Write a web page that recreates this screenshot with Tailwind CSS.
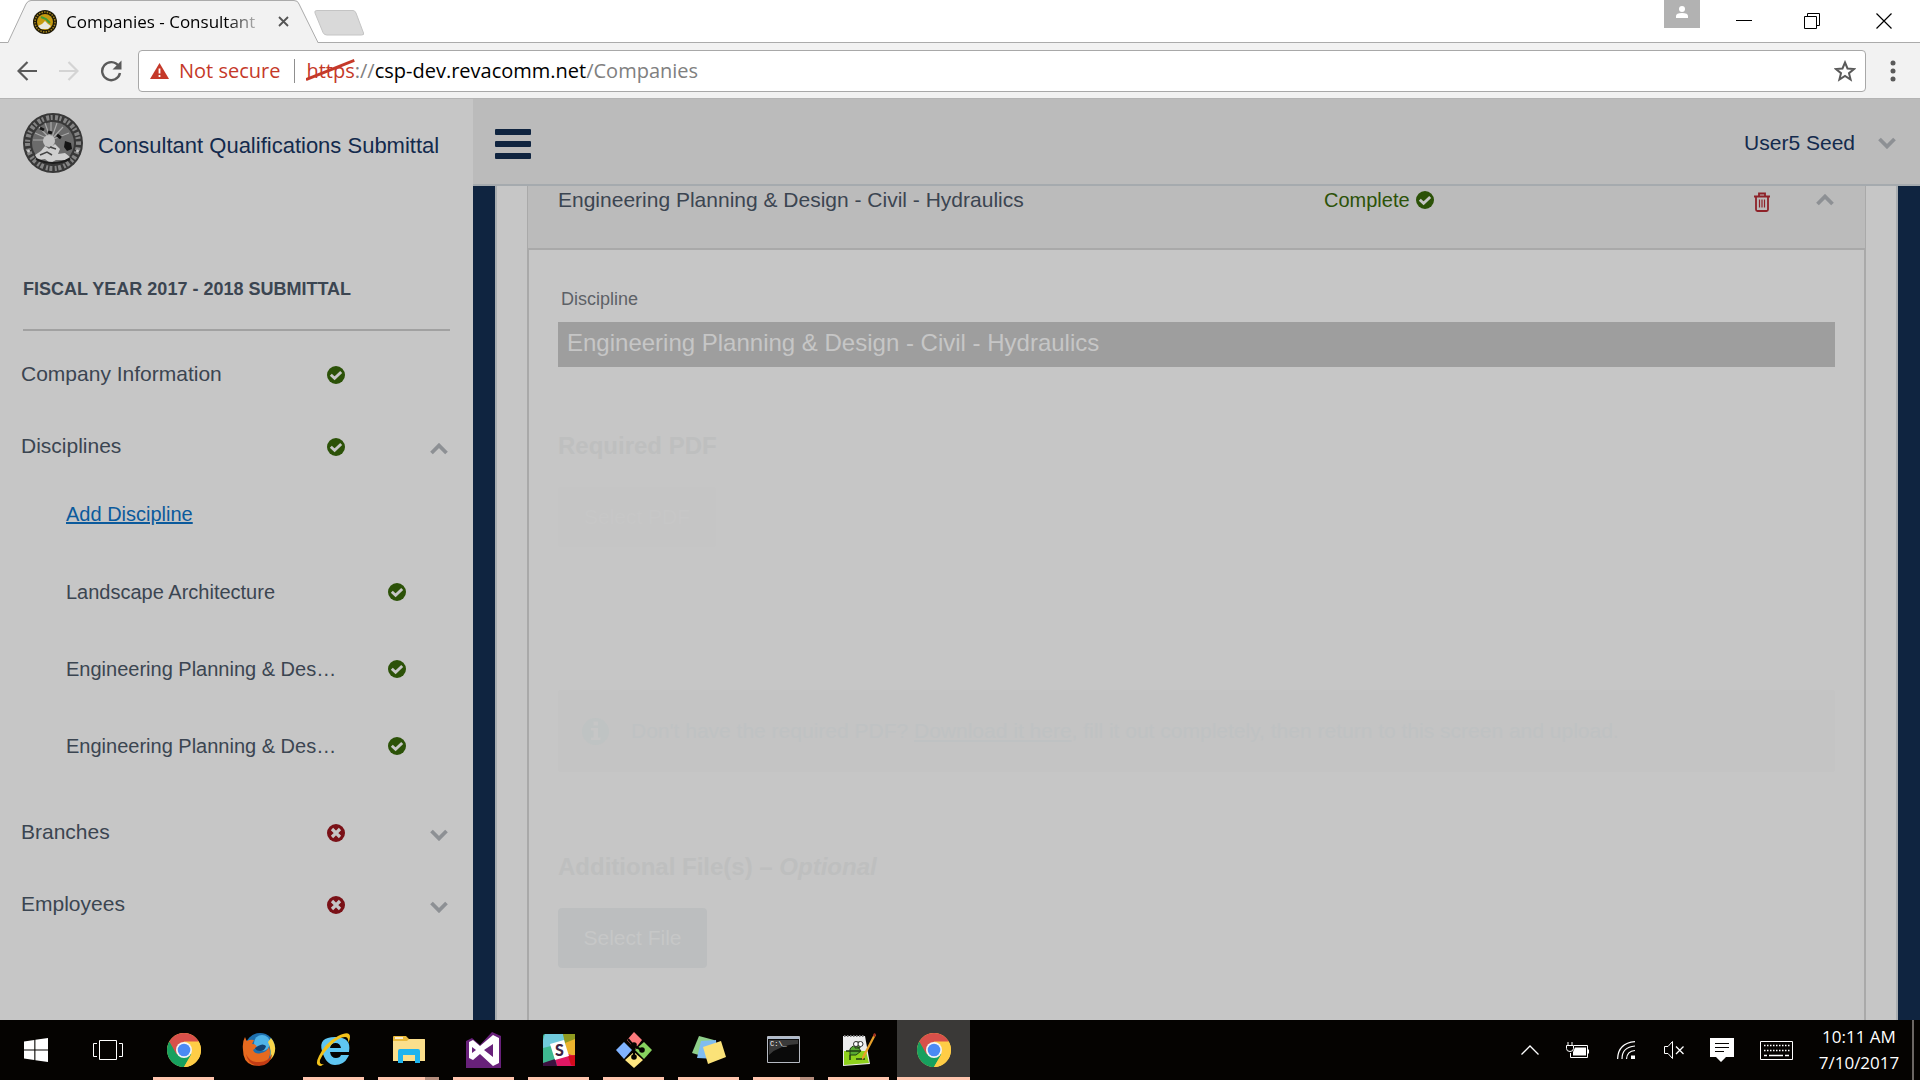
<!DOCTYPE html>
<html lang="en">
<head>
<meta charset="utf-8">
<title>Companies - Consultant Qualifications Submittal</title>
<script src="https://cdn.jsdelivr.net/npm/@tailwindcss/browser@4"></script>
</head>
<body class="flex h-screen flex-col overflow-hidden bg-white font-['Liberation_Sans',sans-serif] text-[#3b4551]">

<svg class="hidden" xmlns="http://www.w3.org/2000/svg">
  <symbol id="ok" viewBox="0 0 18 18"><circle cx="9" cy="9" r="9" fill="#2c5208"/><path d="M3.800 8.800 7.600 12.300 14.200 6" fill="none" stroke="#c6c6c6" stroke-width="2.900"/></symbol>
  <symbol id="bad" viewBox="0 0 18 18"><circle cx="9" cy="9" r="9" fill="#7a1117"/><path d="m5 5 8 8m0-8-8 8" fill="none" stroke="#c6c6c6" stroke-width="3.200"/></symbol>
  <symbol id="down" viewBox="0 0 18 12"><path d="m1.500 2 7.500 7.500L16.500 2" fill="none" stroke="#8d9094" stroke-width="3.800"/></symbol>
  <symbol id="up" viewBox="0 0 18 12"><path d="M1.500 10 9 2.500l7.500 7.500" fill="none" stroke="#8d9094" stroke-width="3.800"/></symbol>
  <symbol id="chrome" viewBox="0 0 34 34">
    <circle cx="17" cy="17" r="17" fill="#ffcd46"/>
    <path d="M2.300 8.500A17 17 0 0 0 17 34l7.400-12.800L17 17z" fill="#17a05e"/>
    <path d="M17 8.500h14.700A17 17 0 0 1 17 34l7.400-12.800z" fill="#ffcd46"/>
    <path d="M2.300 8.500A17 17 0 0 1 31.700 8.500H17L9.600 21.200z" fill="#d8504a"/>
    <circle cx="17" cy="17" r="8" fill="#f4f4f4"/><circle cx="17" cy="17" r="6.300" fill="#4a8af4"/>
  </symbol>
</svg>

<!-- Browser tabs -->
<header class="flex h-[43px] shrink-0 items-start justify-between border-b border-[#ababab] bg-white">
  <div class="flex">
    <div class="relative ml-2 flex h-[43px] w-[311px] items-center pr-[26px] pl-[25px]">
      <svg class="absolute inset-0 h-full w-full" viewBox="0 0 311 43"><path d="M0 43 17 5q2-5 6-5H286q4 0 6 5l18 38z" fill="#f2f2f2"/><path d="M0 42.500 18 4q2-3.500 5-3.500H286q4 0 5 3.500l19 38.500" fill="none" stroke="#ababab"/></svg>
      <svg class="relative size-6 shrink-0" viewBox="0 0 24 24"><circle cx="12" cy="12" r="12" fill="#1d1806"/><circle cx="12" cy="12" r="10" fill="none" stroke="#a8871c" stroke-width="1.500" stroke-dasharray="1.500 1.200"/><circle cx="12" cy="12" r="8" fill="#c79a10"/><path d="m8 7 5 2 4 4" fill="none" stroke="#3f9c3a" stroke-width="2"/><path d="M5 16l4-2 3-3 3 3 3 2-3 3H8z" fill="#e8e8e0"/></svg>
      <span class="relative ml-[9px] w-[200px] shrink-0 bg-linear-to-r from-black from-80% to-transparent to-100% bg-clip-text font-['Open_Sans',sans-serif] text-[17px] leading-6 whitespace-nowrap text-transparent">Companies - Consultant</span>
      <button aria-label="Close tab" class="relative ml-3 shrink-0"><svg class="size-[11px]" viewBox="0 0 11 11"><path d="m1 1 9 9m0-9-9 9" stroke="#555" stroke-width="1.800"/></svg></button>
    </div>
    <button aria-label="New tab" class="-ml-[5px] h-[26px] pt-[10px]"><svg class="h-[26px] w-[51px]" viewBox="0 0 51 26"><path d="M3 .5h36q2 0 3 2.500l7.500 20q1 2-2 2H13q-3 0-4-2.500L1 3q-1-2.500 2-2.500z" fill="#d9d9d9" stroke="#c4c4c4"/></svg></button>
  </div>
  <div class="flex">
    <button aria-label="Profile" class="flex h-7 w-9 items-center justify-center bg-[#b2b2b2]"><svg class="mb-1 h-3 w-3" viewBox="0 0 12 12"><circle cx="6" cy="3" r="3" fill="#fff"/><path d="M0 12V10q0-3 6-3t6 3v2z" fill="#fff"/></svg></button>
    <button aria-label="Minimize" class="flex h-[41px] w-[87px] items-center justify-center"><svg class="size-4" viewBox="0 0 16 16"><path d="M0 7.500h16" stroke="#000"/></svg></button>
    <button aria-label="Restore" class="flex h-[41px] w-[50px] items-center justify-center"><svg class="size-4" viewBox="0 0 16 16"><path d="M.5 3.500h12v12H.5zM3.500 3.500v-3h12v12h-3" fill="none" stroke="#000"/></svg></button>
    <button aria-label="Close" class="mr-3 flex h-[41px] w-[71px] items-center justify-end pr-4"><svg class="size-4" viewBox="0 0 16 16"><path d="m.5.5 15 15m0-15-15 15" stroke="#000" stroke-width="1.200"/></svg></button>
  </div>
</header>

<!-- Address bar -->
<nav class="flex h-14 shrink-0 items-center border-b border-[#b4b4b4] bg-[#f2f2f2] pl-[17px] font-['Open_Sans',sans-serif] text-[20px]">
  <button aria-label="Back"><svg class="size-5" viewBox="0 0 20 20"><path d="M20 10H1.500M10.500 1 1.500 10l9 9" fill="none" stroke="#5a5a5a" stroke-width="2.200"/></svg></button>
  <button aria-label="Forward" class="ml-[22px]" disabled><svg class="size-5" viewBox="0 0 20 20"><path d="M0 10h18.500M9.500 1l9 9-9 9" fill="none" stroke="#d4d4d4" stroke-width="2.200"/></svg></button>
  <button aria-label="Reload" class="ml-[21px]"><svg class="size-[22px]" viewBox="0 0 22 22"><path d="M18.600 6A9 9 0 1 0 20 13" fill="none" stroke="#5a5a5a" stroke-width="2.400"/><path d="M21.500.5v9h-9z" fill="#5a5a5a"/></svg></button>
  <div role="textbox" aria-label="Address" class="ml-4 flex h-[42px] min-w-0 flex-1 items-center rounded-[4px] border border-[#a8a8a8] bg-white pr-[9px] pl-[11px] whitespace-nowrap">
    <svg class="h-4 w-[19px]" viewBox="0 0 19 16"><path d="M9.500 0 19 16H0z" fill="#c53929"/><path d="M9.500 5.500v5m0 1.500v2" stroke="#fff" stroke-width="1.800"/></svg>
    <span class="ml-[10px] text-[#c53929]">Not secure</span>
    <span class="mr-[11px] ml-[14px] h-6 w-px bg-[#8f8f8f]"></span>
    <span class="relative text-[#c53929]">https<svg class="absolute inset-0 h-full w-full" viewBox="0 0 48 28" preserveAspectRatio="none"><path d="M0 22 48 4" stroke="#c53929" stroke-width="2.800"/></svg></span><span class="text-[#808080]">://</span><span class="text-black">csp-dev.revacomm.net</span><span class="text-[#808080]">/Companies</span>
    <button aria-label="Bookmark" class="ml-auto"><svg class="size-[22px]" viewBox="0 0 22 22"><path d="m11 2.500 2.500 6 6.500.5-5 4.200 1.600 6.300L11 16l-5.600 3.500L7 13.200 2 9l6.500-.5z" fill="none" stroke="#5a5a5a" stroke-width="2"/></svg></button>
  </div>
  <button aria-label="Menu" class="mr-6 ml-6"><svg class="h-[22px] w-[6px]" viewBox="0 0 6 22"><g fill="#5a5a5a"><circle cx="3" cy="3" r="2.500"/><circle cx="3" cy="11" r="2.500"/><circle cx="3" cy="19" r="2.500"/></g></svg></button>
</nav>

<div class="flex min-h-0 flex-1 bg-[#0f2440]">
  <!-- Sidebar -->
  <aside class="w-[473px] shrink-0 overflow-hidden bg-[#c6c6c6]">
    <div class="flex h-[180px] items-start gap-[15px] pt-[14px] pl-[23px]">
      <svg class="size-[60px]" viewBox="0 0 60 60">
        <circle cx="30" cy="30" r="30" fill="#383838"/>
        <circle cx="30" cy="30" r="25.500" fill="none" stroke="#858585" stroke-width="5" stroke-dasharray="2 2.500 3 1.500"/>
        <circle cx="30" cy="30" r="21" fill="#6b6b6b"/>
        <g stroke="#a9a9a9" stroke-width="1.200"><path d="M28 27 12 20M28 27 16 14M28 27l-6-17M28 27V9M28 27l6-17M28 27l12-13M28 27l18-7M28 27 10 27"/></g>
        <circle cx="26" cy="28" r="6" fill="#c2c2c2"/>
        <path d="m17 15 4 2m4 2 4 1m5 2 4 3" stroke="#151515" stroke-width="3"/><path d="m42 28 6 2 1 6-5 2-3-4z" fill="#151515"/>
        <path d="m12 42 6-4 4-5 4 3 6-5 5 5-2 5 7-1 5 4-5 3H33l-6 3-5-4-7 1z" fill="#cfcfcf"/><path d="m17 42 7-3 5 3m4-6-6-2" fill="none" stroke="#444" stroke-width="1.500"/>
        <path d="M13 46q17 8 34 0" fill="none" stroke="#1d1d1d" stroke-width="2"/><circle cx="5.500" cy="38" r="1.500" fill="#ccc"/><circle cx="54.500" cy="38" r="1.500" fill="#ccc"/>
      </svg>
      <h1 class="pt-[21px] text-[22px] leading-6 text-[#132a4d]">Consultant Qualifications Submittal</h1>
    </div>
    <h2 class="mr-[23px] ml-[23px] h-[52px] border-b-2 border-[#a1a1a1] text-[18px] leading-5 font-bold">FISCAL YEAR 2017 - 2018 SUBMITTAL</h2>
    <ul class="pt-2 pr-[25px] pl-[21px] text-[21px]">
      <li class="grid h-[72px] grid-cols-[306px_1fr_18px] items-center"><a href="#" class="pb-[2px]">Company Information</a><svg class="size-[18px]"><use href="#ok"/></svg></li>
      <li>
        <div class="grid h-[72px] grid-cols-[306px_1fr_18px] items-center"><a href="#" class="pb-[2px]">Disciplines</a><svg class="size-[18px]"><use href="#ok"/></svg><button aria-label="Collapse disciplines" class="pt-[3px]"><svg class="h-3 w-[18px]"><use href="#up"/></svg></button></div>
        <ul class="pb-[13px] pl-[45px] text-[20px]">
          <li class="mb-2 flex h-[62px] items-center"><a href="#" class="text-[#0b5a9c] underline">Add Discipline</a></li>
          <li class="grid h-[77px] grid-cols-[265px_1fr] items-center gap-x-[57px] whitespace-nowrap"><a href="#">Landscape Architecture</a><svg class="size-[18px]"><use href="#ok"/></svg></li>
          <li class="grid h-[77px] grid-cols-[265px_1fr] items-center gap-x-[57px] whitespace-nowrap"><a href="#">Engineering Planning &amp; Des…</a><svg class="size-[18px]"><use href="#ok"/></svg></li>
          <li class="grid h-[77px] grid-cols-[265px_1fr] items-center gap-x-[57px] whitespace-nowrap"><a href="#">Engineering Planning &amp; Des…</a><svg class="size-[18px]"><use href="#ok"/></svg></li>
        </ul>
      </li>
      <li class="grid h-[72px] grid-cols-[306px_1fr_18px] items-center"><a href="#" class="pb-[2px]">Branches</a><svg class="size-[18px]"><use href="#bad"/></svg><button aria-label="Expand branches" class="pt-[3px]"><svg class="h-3 w-[18px]"><use href="#down"/></svg></button></li>
      <li class="grid h-[72px] grid-cols-[306px_1fr_18px] items-center"><a href="#" class="pb-[2px]">Employees</a><svg class="size-[18px]"><use href="#bad"/></svg><button aria-label="Expand employees" class="pt-[3px]"><svg class="h-3 w-[18px]"><use href="#down"/></svg></button></li>
    </ul>
  </aside>

  <div class="flex min-w-0 flex-1 flex-col">
    <div class="flex h-[87px] shrink-0 items-center justify-between border-b-2 border-[#a5aaae] bg-[#bbbbbb] pr-6 pl-[22px]">
      <button aria-label="Toggle menu" class="mt-1 flex flex-col gap-[6px]"><span class="h-[6px] w-9 rounded-[1px] bg-[#0f2440]"></span><span class="h-[6px] w-9 rounded-[1px] bg-[#0f2440]"></span><span class="h-[6px] w-9 rounded-[1px] bg-[#0f2440]"></span></button>
      <button class="flex items-center gap-[23px] pt-[2px] text-[21px] text-[#132a4d]">User5 Seed<svg class="h-3 w-[18px]"><use href="#down"/></svg></button>
    </div>
    <main class="mx-[22px] flex min-h-0 flex-1 overflow-hidden border-x-2 border-[#a9adb0] bg-[#c6c6c6] px-[30px]">
      <section class="flex min-w-0 flex-1 flex-col">
        <div class="flex h-16 shrink-0 items-start border-x border-b-2 border-[#a9a9a9] bg-[#bbbbbb] pr-[31px] pl-[30px] text-[20px] leading-6">
          <h2 class="w-[766px] pt-[2px] text-[21px]">Engineering Planning &amp; Design - Civil - Hydraulics</h2>
          <span class="flex items-center gap-[6px] pt-[2px] text-[#2c5208]">Complete<svg class="size-[18px]"><use href="#ok"/></svg></span>
          <button aria-label="Delete discipline" class="mt-[6px] ml-auto"><svg class="h-5 w-4" viewBox="0 0 16 20"><path d="M0 4.500h16M5 4V1.500h6V4M2 5v12.500q0 1.500 1.500 1.500h9q1.500 0 1.500-1.500V5" fill="none" stroke="#8e2229" stroke-width="1.800"/><path d="M5.500 7.500v8M8 7.500v8m2.500-8v8" stroke="#8e2229" stroke-width="1.200"/></svg></button>
          <button aria-label="Collapse" class="mt-[8px] ml-[46px]"><svg class="h-3 w-[18px]"><use href="#up"/></svg></button>
        </div>
        <div class="flex min-h-0 flex-1 flex-col items-start overflow-hidden border-x-2 border-[#a9a9a9] px-[29px] pt-[37px]">
          <label for="discipline" class="pl-[3px] text-[18px] leading-6 text-[#5d6166]">Discipline</label>
          <input id="discipline" readonly value="Engineering Planning &amp; Design - Civil - Hydraulics" class="mt-[11px] h-[45px] w-full shrink-0 bg-[#9e9e9e] px-[9px] pb-[3px] text-[24px] text-[#c6c6c6] outline-none">
          <h3 class="mt-[65px] text-[24px] leading-7 font-bold text-[#bebfbf]">Required PDF</h3>
          <button class="mt-[27px] h-[60px] w-[158px] shrink-0 rounded-[3px] bg-[#c5c5c5] text-[21px] text-[#c7c7c7]">Select PDF</button>
          <div class="mt-[143px] flex h-[82px] w-full shrink-0 items-center rounded-[3px] bg-[#c4c4c4] pl-6 text-[21px] text-[#bfc2c3]">
            <svg class="size-[27px]" viewBox="0 0 27 27"><circle cx="13.500" cy="13.500" r="13.500" fill="#bfc3c3"/><path d="M11.500 3.500h4.500v4h-4.500zM9 10h7v9.500h2.500V22H9v-2.500h2.500v-7H9z" fill="#c6c6c6"/></svg>
            <p class="ml-[22px]">Don't have the required PDF? <a href="#" class="underline decoration-2 underline-offset-2">Download it here</a>, fill it out completely, then return to this screen and upload.</p>
          </div>
          <h3 class="mt-[81px] text-[24px] leading-7 font-bold text-[#bebfbf]">Additional File(s) – <em>Optional</em></h3>
          <button class="mt-[27px] h-[60px] w-[149px] shrink-0 rounded-[4px] bg-[#bcbebf] text-[21px] text-[#c6c7c7]">Select File</button>
        </div>
      </section>
    </main>
  </div>
</div>

<!-- Taskbar -->
<footer class="flex h-[60px] shrink-0 items-stretch justify-between bg-[#050301] text-white">
  <div class="flex">
    <button aria-label="Start" class="flex w-[72px] items-center justify-center"><svg class="size-6" viewBox="0 0 24 24"><path d="M0 3.400 10.300 2v9.400H0zM11.400 1.800 24 0v11.400H11.400zM0 12.600h10.300V22L0 20.600zM11.400 12.600H24V24l-12.600-1.800z" fill="#fff"/></svg></button>
    <button aria-label="Task view" class="flex w-[74px] items-center justify-center pr-[2px]"><svg class="h-5 w-[30px]" viewBox="0 0 30 20"><path d="M6.500.5h17v19h-17zM4 3.500H.5v13H4M26 3.500h3.500v13H26" fill="none" stroke="#fff"/></svg></button>

    <button aria-label="Chrome" class="mx-[7px] flex w-[61px] items-center justify-center border-b-[3px] border-[#ffc5ae] pt-[2px]"><svg class="size-[34px]"><use href="#chrome"/></svg></button>
    <button aria-label="Firefox" class="mx-[7px] flex w-[61px] items-center justify-center pb-[2px]"><svg class="size-[34px]" viewBox="0 0 34 34"><circle cx="18" cy="16" r="15" fill="#1d6fae"/><circle cx="20" cy="11" r="8" fill="#4fb3e8"/><path d="M29 6q5 6 4 13-1 6-5 9 2-10-2-18z" fill="#f9d54a"/><path d="M3 5q1 3 2 4 3-2 7-1l-2 4q4 0 5 3l-4 3q2 5 8 3 6-1 8-6 3 9-3 15-6 5-14 3Q1 30 1 18 0 10 3 5z" fill="#e66a1f"/><path d="M16 14q5-3 8 0-1 5-6 5-4 0-5-3z" fill="#12406f"/><path d="M4 22q4 9 14 8 8 0 12-8-1 11-13 12Q6 33 4 22z" fill="#c23c14"/></svg></button>
    <button aria-label="Internet Explorer" class="mx-[7px] flex w-[61px] items-center justify-center border-b-[3px] border-[#ffc5ae] pt-[2px]"><svg class="size-9" viewBox="0 0 36 36"><path d="M32 25Q28 33 19 33T6 19 19 5t14 15H14q1 6 6 6 4 0 5-3h8M14 16h11q-1-5-5.500-5T14 16z" fill="#5fc6f2" fill-rule="evenodd"/><path d="M5 34Q-2 34 3 24 9 11 22 4q12-6 12 1 0 3-2 6 1-6-3-6-6 0-14 8T4 28q-1 5 4 4z" fill="#f2c21b"/></svg></button>
    <button aria-label="File Explorer" class="relative mx-[7px] flex w-[61px] items-center justify-center border-b-[3px] border-[#ffc5ae] pt-[2px]"><svg class="h-[27px] w-8" viewBox="0 0 32 27"><path d="M0 1q0-1 1-1h12l3 3h15q1 0 1 1v21H0z" fill="#e9b93c"/><path d="M0 5h14l2-2h15q1 0 1 1v21H0z" fill="#fbdf8c"/><path d="M2 2h8" stroke="#fff" stroke-width="1.500"/><path d="M5 27V15q0-2 2-2h18q2 0 2 2v12h-5v-8H10v8z" fill="#1fb4ee"/></svg><span class="absolute right-0 -bottom-[3px] h-[3px] w-[14px] bg-[#b58d7d]"></span></button>
    <button aria-label="Visual Studio" class="mx-[7px] flex w-[61px] items-center justify-center border-b-[3px] border-[#ffc5ae] pt-[2px]"><svg class="size-9" viewBox="0 0 36 36"><path d="M0 9 6 6l8 7L26 0l9 4v32H0z" fill="#68217a"/><path d="m3 10 4-2 7 6L27 3l6 3v25l-6 3-13-12-7 6-4-2zm3 5v6l4-3zm21-3-9 6 9 7z" fill="#fff" fill-rule="evenodd"/></svg></button>
    <button aria-label="Slack" class="mx-[7px] flex w-[61px] items-center justify-center border-b-[3px] border-[#ffc5ae] pt-[2px]"><svg class="size-8" viewBox="0 0 32 32"><rect width="32" height="32" rx="2" fill="#3eb890"/><path d="M2 0h18l3 9-15 3L0 14V6z" fill="#70cadb"/><path d="M20 0h12v7l-10 3z" fill="#8f9a20"/><path d="m22 9 10-4v16l-7 1z" fill="#ecb32d"/><path d="m12 25 13-5 7 2v10H14z" fill="#e01765"/><path d="m25 22 7-1v11l-4-1z" fill="#d50c1b"/><path d="m0 29 12-4 2 7H0z" fill="#3b1140"/><path d="m7 10 14-4 5 16-14 4z" fill="#fff"/><text x="16.500" y="22" text-anchor="middle" font-family="Lato,sans-serif" font-weight="900" font-size="16" fill="#3d2240">S</text></svg></button>
    <button aria-label="Git" class="mx-[7px] flex w-[61px] items-center justify-center border-b-[3px] border-[#ffc5ae] pt-[2px]"><svg class="size-9" viewBox="0 0 36 36"><path d="m18 0 8 8-7 9-8-9z" fill="#fc7a7c"/><path d="m8 10 8 8-8 9-8-9z" fill="#80b3ff"/><path d="m28 10 8 8-8 9-9-9z" fill="#87d35f"/><path d="m18 20 9 8-9 8-9-8z" fill="#ffe680"/><path d="m12 7 6 7v12M18 14l8 4" fill="none" stroke="#050301" stroke-width="2"/><circle cx="18" cy="13" r="2.800" fill="#050301"/><circle cx="26" cy="18" r="2.800" fill="#050301"/><circle cx="18" cy="25" r="2.800" fill="#050301"/></svg></button>
    <button aria-label="Sticky Notes" class="mx-[7px] flex w-[61px] items-center justify-center border-b-[3px] border-[#ffc5ae] pt-[2px]"><svg class="h-7 w-[34px]" viewBox="0 0 34 28"><path d="m7 0 15 4-5 18L0 17z" fill="#8fcf8a"/><path d="m9 5 15-1 1 19-20-1z" fill="#7fbcf0"/><path d="m11 11 18-6 5 16-18 7z" fill="#fbe278"/></svg></button>
    <button aria-label="Command Prompt" class="relative mx-[7px] flex w-[61px] items-center justify-center border-b-[3px] border-[#ffc5ae] pt-[2px]"><svg class="h-[27px] w-[33px]" viewBox="0 0 33 27"><path d="M.5.5h32v26H.5z" fill="#0a0a0a" stroke="#b6bac2"/><path d="M1 1h31v2H1z" fill="#aebacb"/><path d="M2 4h29v4Q12 9 2 19z" fill="#3a3a3a"/><text x="3" y="10" font-family="Liberation Mono,monospace" font-size="7" fill="#fff">C:\_</text></svg><span class="absolute right-0 -bottom-[3px] h-[3px] w-[14px] bg-[#b58d7d]"></span></button>
    <button aria-label="Notepad++" class="mx-[7px] flex w-[61px] items-center justify-center border-b-[3px] border-[#ffc5ae] pt-[2px]"><svg class="h-[34px] w-[34px]" viewBox="0 0 34 34"><path d="M1 3h22l5 28-27 2z" fill="#ececec"/><path d="M2 18h22l3 12-25 2z" fill="#8fd11c"/><path d="M2 3h20" stroke="#777" stroke-width="2" stroke-dasharray="1.500 1.500"/><path d="M8 16q3-5 8-2l3 4-5 4H8zM13 9h5v6h-5z" fill="#58a832" stroke="#203c12"/><circle cx="14" cy="11" r="2.500" fill="#fff" stroke="#333"/><circle cx="18.500" cy="11" r="2.500" fill="#fff" stroke="#333"/><path d="M4 18h14M14 26h9M8 22v5" stroke="#1e3810" stroke-width="1.500"/><path d="m32 1 2 1-12 23-2 2v-3z" fill="#e8a02a"/><path d="m32 0 2 1-1 3-2-1z" fill="#a32c22"/></svg></button>
    <button aria-label="Chrome window" class="mx-px flex w-[73px] items-center justify-center border-b-[3px] border-[#ffc5ae] bg-[#3a3937] pt-[2px]"><svg class="size-[34px]"><use href="#chrome"/></svg></button>
  </div>

  <div class="flex">
    <button aria-label="Show hidden icons" class="flex w-12 items-center justify-center"><svg class="h-[10px] w-[18px]" viewBox="0 0 18 10"><path d="m.5 9.500 8.500-8.500 8.500 8.500" fill="none" stroke="#fff" stroke-width="1.300"/></svg></button>
    <button aria-label="Battery" class="flex w-12 items-center justify-center"><svg class="h-4 w-6" viewBox="0 0 24 16"><path d="M8 3.500h13.500v12H4.500V11M22.500 7.500v4" fill="none" stroke="#fff"/><path d="M9 5.500h11v8H7V10z" fill="#fff"/><path d="M.5 3.500h7v3q0 3-3.500 3T.5 6.500zM2 0v3m4-3v3" fill="#050301" stroke="#fff"/></svg></button>
    <button aria-label="Wi-Fi" class="flex w-12 items-center justify-center"><svg class="size-[18px]" viewBox="0 0 18 18"><g fill="none" stroke="#fff" stroke-width="1.200"><path d="M.6 18Q1 2 18 .6M5 18Q5 6 18 5M9.500 18q.5-8 8.500-8.500" /></g><path d="M14 14.500h4V18h-4z" fill="#fff"/></svg></button>
    <button aria-label="Volume muted" class="flex w-12 items-center justify-center"><svg class="h-[18px] w-5" viewBox="0 0 20 18"><path d="M.5 5.500H4l4.500-5v17L4 12.500H.5z" fill="none" stroke="#fff"/><path d="m12 5.500 7.500 7.500m0-7.500L12 13" stroke="#fff" stroke-width="1.300"/></svg></button>
    <button aria-label="Notifications" class="flex w-12 items-center justify-center"><svg class="h-6 w-6" viewBox="0 0 24 24"><path d="M0 0h24v19h-8l-5 5-5-5H0z" fill="#fff"/><path d="M5 5.500h14M5 9.500h14M5 13.500h9" stroke="#050301"/></svg></button>
    <button aria-label="Touch keyboard" class="flex w-[60px] items-center justify-center"><svg class="h-[19px] w-[33px]" viewBox="0 0 33 19"><path d="M.5.5h32v18H.5z" fill="none" stroke="#fff"/><path d="M4 4.500h26M4 9.500h26" stroke="#fff" stroke-width="1.500" stroke-dasharray="1.500 1.500"/><path d="M4 14.500h3m2 0h14m2 0h4" stroke="#fff" stroke-width="1.300"/></svg></button>
    <div class="flex w-[106px] flex-col items-center justify-center font-['Open_Sans',sans-serif] text-[17px] leading-[26px]"><span>10:11 AM</span><span>7/10/2017</span></div>
    <span class="mr-[6px] w-[2px] bg-[#6b6663]"></span>
  </div>
</footer>
</body>
</html>
